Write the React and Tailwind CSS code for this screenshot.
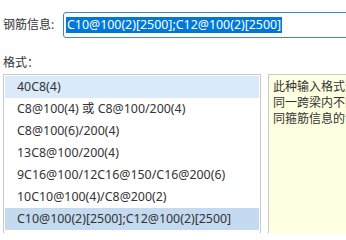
import React from "react";

const formats = [
  "40C8(4)",
  "C8@100(4) 或 C8@100/200(4)",
  "C8@100(6)/200(4)",
  "13C8@100/200(4)",
  "9C16@100/12C16@150/C16@200(6)",
  "10C10@100(4)/C8@200(2)",
  "C10@100(2)[2500];C12@100(2)[2500]",
];

const hintLines = [
  "此种输入格式适用于同一跨梁内",
  "同一跨梁内不同区段设置不",
  "同箍筋信息的设置方式及长度",
];

export default function App() {
  const value = "C10@100(2)[2500];C12@100(2)[2500]";

  return (
    <div
      className="relative w-[346px] h-[233px] overflow-hidden bg-white text-[12px] text-[#333333]"
      style={{ fontFamily: '"Noto Sans", "Noto Sans CJK SC", sans-serif' }}
    >
      {/* 钢筋信息 */}
      <div className="flex items-center pt-[12px] pl-[3px]">
        <span className="w-[60px] shrink-0 leading-[26px]">钢筋信息:</span>
        <div className="flex h-[26px] w-[300px] shrink-0 items-center rounded-[3px] border border-[#3c86d4] pl-[2px]">
          <span className="bg-[#0078d7] px-px text-[12.4px] leading-[16px] text-white whitespace-nowrap">{value}</span>
        </div>
      </div>

      {/* 格式 */}
      <div className="pl-[3px] pt-[17px] leading-[16px]">格式：</div>

      <div className="flex gap-[7px] pl-[3px] pt-[3px]">
        {/* list */}
        <div className="h-[200px] w-[258px] shrink-0 border border-[#c9c9c9] p-px">
          {formats.map((f, i) => (
            <div
              key={f}
              className={`h-[22px] whitespace-nowrap pl-[12px] text-[12.4px] leading-[22px] ${
                i === 0 ? "bg-[#dbeafb]" : i === formats.length - 1 ? "bg-[#c4daf1]" : ""
              }`}
            >
              {f}
            </div>
          ))}
        </div>

        {/* hint */}
        <div className="h-[200px] w-[200px] shrink-0 border border-[#c9c9c9] bg-[#ffffe1] pl-[4px] pt-[4px]">
          {hintLines.map((l) => (
            <div key={l} className="whitespace-nowrap leading-[16px]">
              {l}
            </div>
          ))}
        </div>
      </div>
    </div>
  );
}
